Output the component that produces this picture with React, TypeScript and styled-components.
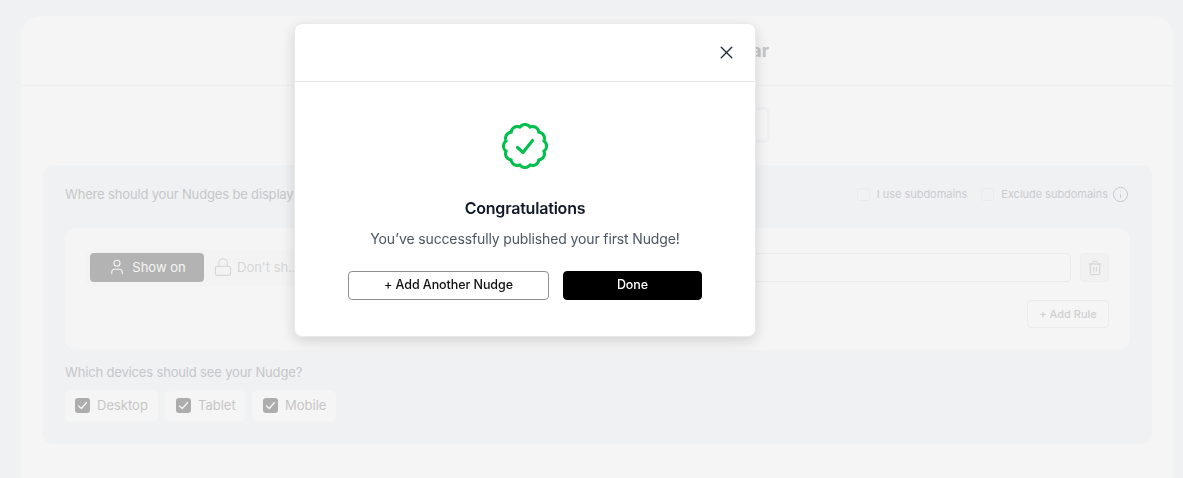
import React from "react";
import styled, { createGlobalStyle } from "styled-components";
import { Info, Lock, Trash2, User, X } from "lucide-react";

const Global = createGlobalStyle`
  html, body { margin: 0; height: 478px; overflow: hidden; background: #f0f1f3; }
  body { font-family: Inter, "Liberation Sans", sans-serif; }
  * { box-sizing: border-box; }
`;

const Page = styled.div`
  height: 478px;
  padding: 16px 10px 0 21px;
`;
const Card = styled.main`
  background: #f5f5f5;
  border-radius: 20px 20px 0 0;
  height: 480px;
`;
const CardHeader = styled.header`
  height: 70px;
  border-bottom: 1px solid #efeff0;
  display: flex;
  align-items: center;
  justify-content: center;
`;
const PageTitle = styled.h1`
  margin: 0;
  width: 344px;
  text-align: right;
  font-size: 18px;
  font-weight: 700;
  color: #c5c5c6;
  white-space: nowrap;
`;
const TabRow = styled.div`
  display: flex;
  justify-content: center;
  padding: 21px 0 22px;
`;
const TabGroup = styled.div`
  width: 346px;
  height: 36px;
  border: 3px solid #eff0f2;
  border-radius: 6px;
`;
const Section = styled.section`
  margin: 0 21px 0 22px;
  background: #f0f1f3;
  border-radius: 10px;
  padding: 19px 22px 22px;
`;
const SectionTop = styled.div`
  display: flex;
  align-items: center;
  justify-content: space-between;
  height: 20px;
`;
const Question = styled.div`
  font-size: 13px;
  line-height: 20px;
  font-weight: 400;
  letter-spacing: -0.16px;
  color: #c6c7c9;
  white-space: nowrap;
`;
const Options = styled.div`
  display: flex;
  align-items: center;
  margin-right: 1px;
`;
const Option = styled.label`
  display: flex;
  align-items: center;
  gap: 7px;
  margin-left: 14px;
  font-size: 11px;
  font-weight: 400;
  letter-spacing: -0.03px;
  color: #cbccce;
`;
const EmptyBox = styled.span`
  width: 13px;
  height: 13px;
  border: 1px solid #ebebec;
  border-radius: 3px;
`;
const InfoMark = styled.span`
  display: flex;
  margin-left: 4px;
  color: #c3c4c6;
`;
const RuleCard = styled.div`
  margin-top: 24px;
  background: #f5f5f5;
  border-radius: 12px;
  padding: 21px 21px 22px;
  height: 122px;
`;
const RuleRow = styled.div`
  display: flex;
  align-items: center;
  height: 37px;
`;
const Segment = styled.div`
  display: flex;
  gap: 4px;
  padding: 4px;
  background: #f3f3f3;
  border-radius: 6px;
  height: 37px;
`;
const SegmentButton = styled.div<{ $active?: boolean }>`
  width: 114px;
  height: 29px;
  border-radius: 4px;
  display: flex;
  align-items: center;
  justify-content: ${(p) => (p.$active ? "center" : "flex-start")};
  padding: 0 0 2px ${(p) => (p.$active ? "0" : "5px")};
  gap: ${(p) => (p.$active ? "6px" : "4px")};
  font-size: 13px;
  font-weight: 400;
  white-space: nowrap;
  background: ${(p) => (p.$active ? "#b3b3b3" : "transparent")};
  color: ${(p) => (p.$active ? "#f5f5f5" : "#d6d6d7")};
`;
const RuleInput = styled.div`
  flex: 1;
  height: 29px;
  margin: 0 9px 0 12px;
  border: 1px solid #ebebec;
  border-radius: 4px;
`;
const TrashButton = styled.div`
  width: 29px;
  height: 29px;
  display: flex;
  align-items: center;
  justify-content: center;
  background: #f1f1f2;
  border: 1px solid #eeeeef;
  border-radius: 4px;
  color: #d2d2d3;
`;
const RuleFooter = styled.div`
  display: flex;
  justify-content: flex-end;
  margin-top: 14px;
`;
const AddRule = styled.div`
  width: 82px;
  height: 28px;
  padding-bottom: 1px;
  display: flex;
  align-items: center;
  justify-content: center;
  border: 1px solid #ebebec;
  border-radius: 4px;
  font-size: 11px;
  font-weight: 500;
  color: #d0d0d1;
`;
const DevicesLabel = styled(Question)`
  margin-top: 12px;
`;
const Devices = styled.div`
  display: flex;
  gap: 7px;
  margin-top: 8px;
`;
const Device = styled.div<{ $width: number; $inset: number }>`
  width: ${(p) => p.$width}px;
  height: 32px;
  display: flex;
  align-items: center;
  gap: 7px;
  padding: 0 0 2px ${(p) => p.$inset}px;
  background: #f5f5f5;
  border-radius: 6px;
  font-size: 13px;
  font-weight: 400;
  color: #c6c6c7;
`;
const CheckedBox = styled.span`
  width: 15px;
  height: 15px;
  display: flex;
  align-items: center;
  justify-content: center;
  background: #adadad;
  border-radius: 3px;
`;

const Modal = styled.div`
  position: fixed;
  left: 294px;
  top: 23px;
  width: 462px;
  height: 314px;
  background: #fff;
  border: 1px solid #e8e9eb;
  border-radius: 8px;
  box-shadow: 0 4px 14px rgba(0, 0, 0, 0.14);
`;
const ModalHeader = styled.div`
  height: 58px;
  border-bottom: 1px solid #e5e7eb;
  display: flex;
  align-items: center;
  justify-content: flex-end;
  padding: 0 18px 0 0;
  color: #1f2937;
`;
const ModalBody = styled.div`
  display: flex;
  flex-direction: column;
  align-items: center;
  padding-top: 41px;
`;
const ModalTitle = styled.h2`
  margin: 27px 0 0;
  font-size: 16px;
  line-height: 24px;
  font-weight: 600;
  letter-spacing: -0.2px;
  color: #111827;
`;
const ModalText = styled.p`
  margin: 9px 0 0;
  font-size: 14px;
  line-height: 20px;
  font-weight: 400;
  letter-spacing: -0.13px;
  color: #4b5563;
`;
const ModalActions = styled.div`
  display: flex;
  gap: 14px;
  margin-top: 22px;
`;
const ActionButton = styled.button<{ $primary?: boolean }>`
  width: ${(p) => (p.$primary ? 139 : 201)}px;
  height: 29px;
  padding: 0 0 2px;
  font: 500 12.5px Inter, "Liberation Sans", sans-serif;
  letter-spacing: -0.07px;
  border-radius: 4px;
  border: 1px solid ${(p) => (p.$primary ? "#000" : "#8f8f8f")};
  background: ${(p) => (p.$primary ? "#000" : "#fff")};
  color: ${(p) => (p.$primary ? "#fff" : "#111")};
`;

function badgePath() {
  const pts: string[] = [];
  for (let i = 0; i <= 480; i++) {
    const t = (i / 480) * Math.PI * 2;
    const r = 19.5 + 2 * Math.pow(Math.abs(Math.cos(6 * t)), 0.8);
    const x = 23 + r * Math.sin(t);
    const y = 23 - r * Math.cos(t);
    pts.push(`${i === 0 ? "M" : "L"}${x.toFixed(2)} ${y.toFixed(2)}`);
  }
  return pts.join(" ") + " Z";
}

const BadgeIcon = () => (
  <svg width="46" height="46" viewBox="0 0 46 46" fill="none" stroke="#00c04b" strokeWidth="3.1" strokeLinecap="round" strokeLinejoin="round">
    <path d={badgePath()} />
    <path d="M15.5 24.5l5.5 5 9.5-12" />
  </svg>
);

const TickIcon = () => (
  <svg width="11" height="11" viewBox="0 0 11 11" fill="none" stroke="#f5f5f5" strokeWidth="1.3" strokeLinecap="round" strokeLinejoin="round">
    <path d="M1.5 6l2.8 2.5L9.5 2.5" />
  </svg>
);

const devices = [
  { name: "Desktop", width: 93, inset: 10 },
  { name: "Tablet", width: 80, inset: 11 },
  { name: "Mobile", width: 84, inset: 11 },
];

export default function App() {
  return (
    <>
      <Global />
      <Page>
        <Card>
          <CardHeader>
            <PageTitle>Where should your Nudge appear</PageTitle>
          </CardHeader>
          <TabRow>
            <TabGroup />
          </TabRow>
          <Section>
            <SectionTop>
              <Question>Where should your Nudges be displayed?</Question>
              <Options>
                <Option><EmptyBox />I use subdomains</Option>
                <Option><EmptyBox />Exclude subdomains</Option>
                <InfoMark><Info size={17} strokeWidth={1.3} /></InfoMark>
              </Options>
            </SectionTop>
            <RuleCard>
              <RuleRow>
                <Segment>
                  <SegmentButton $active><User size={18} strokeWidth={1.5} />Show on</SegmentButton>
                  <SegmentButton><Lock size={20} strokeWidth={1.3} />Don't sh...</SegmentButton>
                </Segment>
                <RuleInput />
                <TrashButton><Trash2 size={16} strokeWidth={1.4} /></TrashButton>
              </RuleRow>
              <RuleFooter>
                <AddRule>+ Add Rule</AddRule>
              </RuleFooter>
            </RuleCard>
            <DevicesLabel>Which devices should see your Nudge?</DevicesLabel>
            <Devices>
              {devices.map((d) => (
                <Device key={d.name} $width={d.width} $inset={d.inset}>
                  <CheckedBox><TickIcon /></CheckedBox>
                  {d.name}
                </Device>
              ))}
            </Devices>
          </Section>
        </Card>
      </Page>
      <Modal>
        <ModalHeader><X size={21} strokeWidth={1.6} /></ModalHeader>
        <ModalBody>
          <BadgeIcon />
          <ModalTitle>Congratulations</ModalTitle>
          <ModalText>You’ve successfully published your first Nudge!</ModalText>
          <ModalActions>
            <ActionButton>+ Add Another Nudge</ActionButton>
            <ActionButton $primary>Done</ActionButton>
          </ModalActions>
        </ModalBody>
      </Modal>
    </>
  );
}
